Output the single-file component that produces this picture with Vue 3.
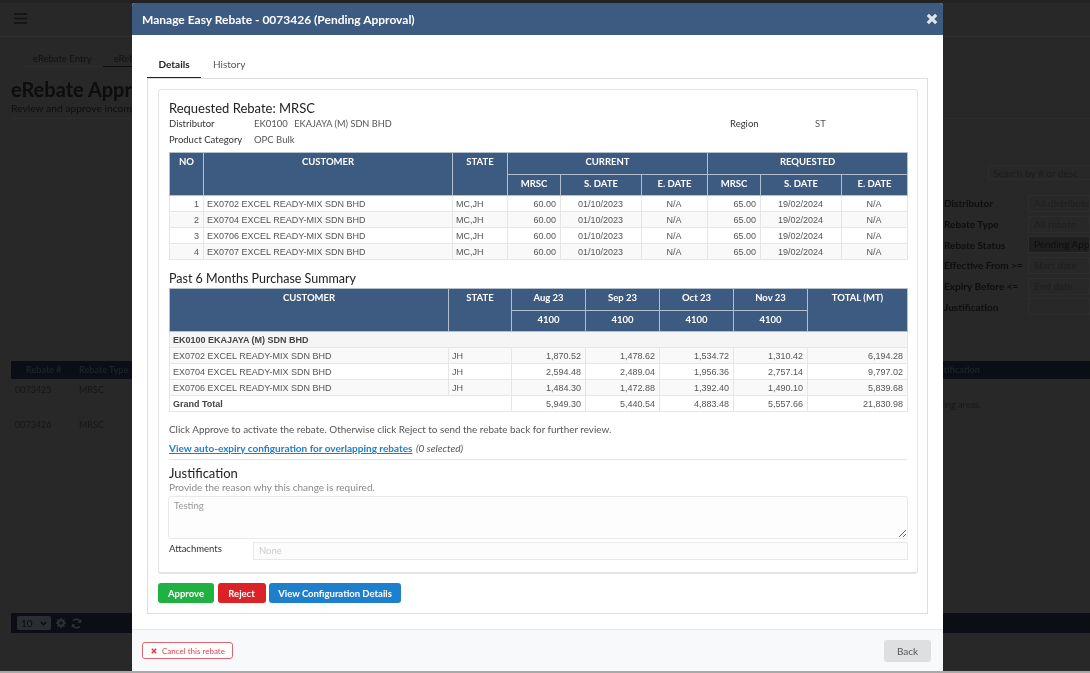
<script setup>
const rows1 = [
  ['1', 'EX0702 EXCEL READY-MIX SDN BHD'],
  ['2', 'EX0704 EXCEL READY-MIX SDN BHD'],
  ['3', 'EX0706 EXCEL READY-MIX SDN BHD'],
  ['4', 'EX0707 EXCEL READY-MIX SDN BHD'],
]
const rows2 = [
  ['EX0702 EXCEL READY-MIX SDN BHD', 'JH', '1,870.52', '1,478.62', '1,534.72', '1,310.42', '6,194.28'],
  ['EX0704 EXCEL READY-MIX SDN BHD', 'JH', '2,594.48', '2,489.04', '1,956.36', '2,757.14', '9,797.02'],
  ['EX0706 EXCEL READY-MIX SDN BHD', 'JH', '1,484.30', '1,472.88', '1,392.40', '1,490.10', '5,839.68'],
]
const totals = ['5,949.30', '5,440.54', '4,883.48', '5,557.66', '21,830.98']
const months = ['Aug 23', 'Sep 23', 'Oct 23', 'Nov 23']
const filters = [
  ['Distributor', 'All distributors', false],
  ['Rebate Type', 'All rebate', false],
  ['Rebate Status', 'Pending App', true],
  ['Effective From >=', 'Start date', false],
  ['Expiry Before <=', 'End date', false],
  ['Justification', '', false],
]
</script>

<template>
  <div class="page">
    <header class="topbar">
      <svg class="burger" width="13" height="11" viewBox="0 0 13 11"><path d="M0 1h13M0 5.500h13M0 10h13" stroke="#111" stroke-width="1.600" /></svg>
    </header>
    <nav class="bgtabs">
      <span>eRebate Entry</span>
      <span class="bgactive">eRebate Approval</span>
    </nav>
    <div class="bgtitle">
      <h1>eRebate Approval</h1>
      <p>Review and approve incoming rebate requests</p>
    </div>
    <div class="bgfilters">
      <div class="bgsearch">Search by # or desc</div>
      <div v-for="f in filters" :key="f[0]" class="bgfilter">
        <label>{{ f[0] }}</label>
        <div class="bginput" :class="{ bgstrong: f[2] }">{{ f[1] }}</div>
      </div>
    </div>
    <div class="bgtable">
      <div class="bghead">
        <span class="c1">Rebate #</span><span class="c2">Rebate Type</span><span class="c3">Justification</span>
      </div>
      <div class="bgrow"><span class="c1">0073425</span><span class="c2">MRSC</span><span class="c3"><br />selling areas.</span></div>
      <div class="bgrow"><span class="c1">0073426</span><span class="c2">MRSC</span><span class="c3"></span></div>
    </div>
    <div class="bgfoot">
      <span class="bgselect">10
        <svg width="7" height="5" viewBox="0 0 7 5"><path d="M.8 1l2.700 2.700L6.200 1" fill="none" stroke="#0b0b0b" stroke-width="1.500" /></svg>
      </span>
      <svg class="gear" width="10" height="10" viewBox="0 0 10 10"><circle cx="5" cy="5" r="2.700" fill="none" stroke="#2f3236" stroke-width="2" /><path d="M5 0v2M5 8v2M0 5h2M8 5h2M1.500 1.500l1.400 1.400M7.100 7.100l1.400 1.400M8.500 1.500L7.100 2.900M2.900 7.100L1.500 8.500" stroke="#2f3236" stroke-width="1.500" /></svg>
      <svg width="11" height="11" viewBox="0 0 11 11"><path d="M9.500 4.200A4.200 4.200 0 0 0 2.200 2.800M1.500 6.800A4.200 4.200 0 0 0 8.800 8.200" fill="none" stroke="#2f3236" stroke-width="1.600" /><path d="M10.300 1v3.800H6.500zM.7 10V6.200h3.800z" fill="#2f3236" /></svg>
    </div>

    <section class="modal">
      <div class="mhead">
        <h2>Manage Easy Rebate - 0073426 (Pending Approval)</h2>
        <svg class="mclose" width="12" height="12" viewBox="0 0 12 12"><path d="M1.800 1.800l8.400 8.400M10.200 1.800l-8.400 8.400" stroke="#dfe4ea" stroke-width="3.200" /></svg>
      </div>
      <div class="mbody">
        <div class="tabs">
          <span class="tab on">Details</span>
          <span class="tab">History</span>
        </div>
        <div class="panel">
          <div class="card">
            <h3 class="h1st">Requested Rebate: MRSC</h3>
            <div class="info">
              <b>Distributor</b><span>EK0100 <span class="gap">EKAJAYA (M) SDN BHD</span></span><b>Region</b><span>ST</span>
              <b>Product Category</b><span>OPC Bulk</span><i></i><i></i>
            </div>
            <table class="t t1">
              <colgroup>
                <col style="width:34px" /><col style="width:249px" /><col style="width:55px" />
                <col style="width:53px" /><col style="width:81px" /><col style="width:66px" />
                <col style="width:53px" /><col style="width:81px" /><col style="width:66px" />
              </colgroup>
              <thead>
                <tr>
                  <th rowspan="2">NO</th><th rowspan="2">CUSTOMER</th><th rowspan="2">STATE</th>
                  <th colspan="3" class="mid">CURRENT</th><th colspan="3" class="mid">REQUESTED</th>
                </tr>
                <tr>
                  <th class="mid">MRSC</th><th class="mid">S. DATE</th><th class="mid">E. DATE</th>
                  <th class="mid">MRSC</th><th class="mid">S. DATE</th><th class="mid">E. DATE</th>
                </tr>
              </thead>
              <tbody>
                <tr v-for="r in rows1" :key="r[0]">
                  <td class="r">{{ r[0] }}</td><td>{{ r[1] }}</td><td>MC,JH</td>
                  <td class="r">60.00</td><td class="c">01/10/2023</td><td class="c">N/A</td>
                  <td class="r">65.00</td><td class="c">19/02/2024</td><td class="c">N/A</td>
                </tr>
              </tbody>
            </table>

            <h3 class="h2nd">Past 6 Months Purchase Summary</h3>
            <table class="t t2">
              <colgroup>
                <col style="width:279px" /><col style="width:63px" />
                <col style="width:74px" /><col style="width:74px" /><col style="width:74px" /><col style="width:74px" />
                <col style="width:100px" />
              </colgroup>
              <thead>
                <tr>
                  <th rowspan="2">CUSTOMER</th><th rowspan="2">STATE</th>
                  <th v-for="m in months" :key="m" class="mid">{{ m }}</th>
                  <th rowspan="2">TOTAL (MT)</th>
                </tr>
                <tr><th v-for="m in months" :key="m" class="mid">4100</th></tr>
              </thead>
              <tbody>
                <tr><td colspan="7" class="group">EK0100 EKAJAYA (M) SDN BHD</td></tr>
                <tr v-for="r in rows2" :key="r[0]">
                  <td>{{ r[0] }}</td><td>{{ r[1] }}</td>
                  <td v-for="n in 5" :key="n" class="r">{{ r[n + 1] }}</td>
                </tr>
                <tr class="total">
                  <td colspan="2"><b>Grand Total</b></td>
                  <td v-for="v in totals" :key="v" class="r">{{ v }}</td>
                </tr>
              </tbody>
            </table>

            <p class="note">Click Approve to activate the rebate. Otherwise click Reject to send the rebate back for further review.</p>
            <p class="linkline"><a href="#" @click.prevent>View auto-expiry configuration for overlapping rebates</a> <em>(0 selected)</em></p>
            <hr />
            <h3 class="h3rd">Justification</h3>
            <p class="hint">Provide the reason why this change is required.</p>
            <textarea class="ta" disabled>Testing</textarea>
            <div class="attach">
              <label>Attachments</label>
              <div class="none">None</div>
            </div>
          </div>
          <div class="actions">
            <button class="btn green">Approve</button>
            <button class="btn red">Reject</button>
            <button class="btn blue">View Configuration Details</button>
          </div>
        </div>
      </div>
      <footer class="mfoot">
        <button class="cancel">
          <svg width="6" height="6" viewBox="0 0 6 6"><path d="M.8.800l4.400 4.400M5.200.800L.8 5.200" stroke="#dc3545" stroke-width="1.500" /></svg>
          Cancel this rebate
        </button>
        <button class="back">Back</button>
      </footer>
    </section>
    <div class="edge"></div>
  </div>
</template>

<style>
html, body { margin: 0; background: #282828; overflow: hidden; }
</style>

<style scoped>
* { box-sizing: border-box; }
.page {
  position: relative;
  width: 1090px;
  height: 673px;
  overflow: hidden;
  background: #282828;
  font-family: Lato, "Liberation Sans", sans-serif;
  color: #111;
  filter: blur(0.3px);
}
.topbar { height: 37px; border-bottom: 1px solid #2f2f2f; padding: 10px 14px 0; border-top: 3px solid #222; }
.burger { display: block; }
.bgtabs { display: flex; height: 31px; padding: 16px 0 0 22px; font-size: 9.500px; color: #121212; }
.bgtabs span { padding: 0 11px; height: 14px; border-bottom: 1px solid #2e2e2e; }
.bgtabs .bgactive { border-bottom: 1px solid #0d0d0d; }
.bgtitle { margin: 0 0 0 11px; height: 51px; border-bottom: 1px solid #2d2d2d; padding-top: 9px; }
.bgtitle h1 { margin: 0; font-size: 20px; line-height: 24px; font-weight: 700; color: #0d0d0d; }
.bgtitle p { margin: 1px 0 0; font-size: 10.300px; line-height: 12px; color: #0f0f0f; }
.bgfilters { margin-left: 944px; height: 242px; padding-top: 47px; font-size: 10px; color: #0e0e0e; font-weight: 700; }
.bgsearch { margin: -1px 0 13px 44px; height: 15px; line-height: 14px; font-weight: 400; color: #1c1c1c; border: 1px solid #2d2d2d; padding-left: 4px; white-space: nowrap; width: 120px; }
.bgfilter { display: flex; height: 20.700px; align-items: center; white-space: nowrap; }
.bgfilter label { width: 84px; flex: none; }
.bginput { width: 80px; height: 17px; line-height: 15px; border: 1px solid #2d2d2d; padding-left: 5px; font-weight: 400; color: #1e1e1e; overflow: hidden; }
.bginput.bgstrong { background: #1f1f1f; color: #0e0e0e; }
.bgtable { margin-left: 11px; font-size: 9px; height: 252px; }
.bghead, .bgrow { display: flex; white-space: nowrap; }
.bghead { height: 18px; line-height: 18px; background: #0b0e14; color: #1d232b; font-weight: 700; }
.bgrow { height: 35px; padding-top: 3px; line-height: 15px; color: #161616; }
.c1 { width: 68px; padding-left: 4px; flex: none; }
.bghead .c1 { padding-left: 15px; }
.c2 { width: 852px; flex: none; }
.c3 { flex: none; }
.bgfoot { margin-left: 11px; height: 20px; background: #0b0e14; display: flex; align-items: center; gap: 5px; padding-left: 6px; }
.bgselect { display: inline-flex; align-items: center; justify-content: space-between; width: 34px; height: 14px; padding: 0 4px 0 4px; background: #2a2d31; border-radius: 2px; font-size: 10px; color: #0c0c0c; }
.edge { position: absolute; left: 0; right: 0; bottom: 0; height: 2px; background: #a9a9a9; z-index: 3; }

.modal {
  position: absolute;
  left: 132px;
  top: 3px;
  width: 811px;
  height: 668px;
  display: flex;
  flex-direction: column;
  background: #fff;
  border-radius: 3px 3px 0 0;
  overflow: hidden;
  z-index: 2;
}
.mhead { height: 32px; flex: none; background: #3d5a80; color: #fff; display: flex; align-items: center; justify-content: space-between; padding: 0 5px 0 10px; }
.mhead h2 { margin: 0; font-size: 12px; font-weight: 700; }
.mbody { flex: 1; padding: 19px 15px 0; }
.tabs { display: flex; height: 24px; }
.tab { padding: 0 11.500px; font-size: 10px; line-height: 20px; color: #555; }
.tab.on { color: #222; font-weight: 700; border-bottom: 1px solid #222; width: 54px; }
.tab:nth-child(2) { padding-left: 12px; }
.panel { height: 536px; border: 1px solid #ddd; padding: 10px 10px 0; }
.card { height: 485px; width: 760px; border: 1px solid #e4e4e4; border-bottom-width: 2px; border-radius: 3px; padding: 0 10px; }
h3 { margin: 0; font-weight: 400; color: #222; }
.h1st { font-size: 13px; line-height: 18px; padding-top: 9px; height: 26px; }
.info { display: grid; grid-template-columns: 85px 476px 85px 1fr; font-size: 9.500px; line-height: 16px; color: #555; margin-bottom: 4px; }
.info b { font-weight: 400; color: #333; }
.gap { font-size: 9.200px; margin-left: 4px; }
.t { table-layout: fixed; border-collapse: collapse; width: 738px; font-family: "Liberation Sans", sans-serif; font-size: 9px; color: #555; }
.t th { background: #3d5a80; color: #fff; font-family: Lato, sans-serif; font-size: 9.500px; font-weight: 700; border: 1px solid #b3bfcd; height: 21.500px; vertical-align: top; padding: 3px 0 0; text-align: center; line-height: 12px; }
.t th.mid { vertical-align: middle; padding: 0 0 2px; }
.t td { border: 1px solid #e6e6e6; height: 16px; line-height: 14px; padding: 0 4px 0 3px; white-space: nowrap; overflow: hidden; }
.t tbody tr:nth-child(even) td { background: #f9f9f9; }
.t td.r { text-align: right; }
.t td.c { text-align: center; }
.t td.group { font-weight: 700; background: #f5f5f5 !important; color: #444; }
.t .total td { background: #fff !important; color: #555; }
.t .total b { color: #444; }
.h2nd { font-size: 12.500px; line-height: 17px; margin-top: 10px; height: 18px; }
.note { margin: 9px 0 0; font-size: 9.900px; line-height: 16px; color: #555; }
.linkline { margin: 3px 0 0; font-size: 10px; line-height: 16px; }
.linkline a { color: #1c7fc8; font-weight: 700; text-decoration: underline; }
.linkline em { color: #555; margin-left: 1px; }
hr { margin: 3px 0 0; height: 1px; width: 738px; border: 0; background: #e4e4e4; }
.h3rd { font-size: 13px; line-height: 17px; margin-top: 5px; }
.hint { margin: 0; font-size: 10px; line-height: 11px; color: #888; }
.ta { display: block; width: 740px; height: 43px; margin: 3px 0 0 -1px; padding: 3px 5px; border: 1px solid #e8e8e8; border-radius: 3px; background: #fdfdfd; font-family: Lato, sans-serif; font-size: 9.500px; color: #999; resize: vertical; }
.attach { display: flex; margin-top: 3px; }
.attach label { width: 84px; flex: none; font-size: 9.500px; line-height: 12px; padding-top: 1px; color: #333; }
.none { width: 655px; flex: none; height: 18px; line-height: 16px; border: 1px solid #e8e8e8; background: #fcfcfc; padding-left: 5px; font-size: 9.500px; color: #ccc; }
.actions { display: flex; gap: 3.500px; margin-top: 9px; }
.btn { height: 20px; border: 0; border-radius: 3px; color: #fff; font-family: Lato, sans-serif; font-size: 9.500px; font-weight: 700; padding: 0; }
.green { width: 56px; background: #1fb141; }
.red { width: 48px; background: #dc2127; }
.blue { width: 132px; background: #1e80cc; }
.mfoot { height: 42px; flex: none; background: #f8f9fa; border-top: 1px solid #e6e6e6; display: flex; align-items: center; justify-content: space-between; padding: 0 12px 0 10px; }
.cancel { width: 91px; height: 17px; display: flex; align-items: center; gap: 5px; padding: 0 0 0 8px; background: #fff; border: 1px solid #e2666f; border-radius: 3px; color: #e0434e; font-family: Lato, sans-serif; font-size: 8px; white-space: nowrap; }
.back { width: 47px; height: 22px; border: 0; border-radius: 3px; background: #dedfe0; color: #555; font-family: Lato, sans-serif; font-size: 10px; padding: 0; }
</style>
